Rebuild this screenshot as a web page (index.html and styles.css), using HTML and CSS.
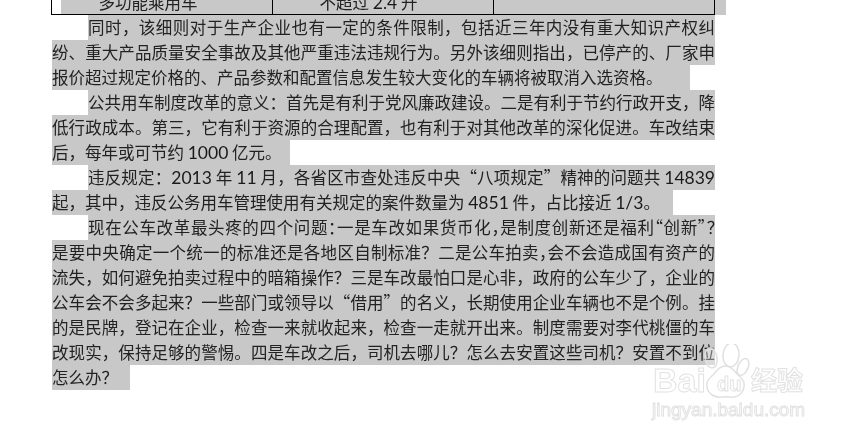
FILE: index.html
```html
<!DOCTYPE html>
<html lang="zh-CN">
<head>
<meta charset="utf-8">
<title>公车改革</title>
<link rel="stylesheet" href="styles.css">
</head>
<body>
<div class="table-wrap">
  <div class="table">
    <div class="cell c1">多功能乘用车</div>
    <div class="cell c2">不超过 <span class="num">2.4</span> 升</div>
    <div class="cell c3"></div>
  </div>
  <div class="tail"></div>
</div>
<div class="doc">
  <div class="line first">同时，该细则对于生产企业也有一定的条件限制，包括近三年内没有重大知识产权纠</div>
  <div class="line">纷、重大产品质量安全事故及其他严重违法违规行为。另外该细则指出，已停产的、厂家申</div>
  <div class="line short w638">报价超过规定价格的、产品参数和配置信息发生较大变化的车辆将被取消入选资格。</div>
  <div class="line first">公共用车制度改革的意义：首先是有利于党风廉政建设。二是有利于节约行政开支，降</div>
  <div class="line">低行政成本。第三，它有利于资源的合理配置，也有利于对其他改革的深化促进。车改结束</div>
  <div class="line short w238">后，每年或可节约 <span class="num">1000</span> 亿元。</div>
  <div class="line first">违反规定：<span class="num">2013</span> 年 <span class="num">11</span> 月，各省区市查处违反中央“八项规定”精神的问题共 <span class="num">14839</span></div>
  <div class="line short w621">起，其中，违反公务用车管理使用有关规定的案件数量为 <span class="num">4851</span> 件，占比接近 <span class="num">1/3</span>。</div>
  <div class="line first tight">现在公车改革最头疼的四个问题：一是车改如果货币化，是制度创新还是福利“创新”？</div>
  <div class="line">是要中央确定一个统一的标准还是各地区自制标准？二是公车拍卖<span class="tight">，</span>会不会造成国有资产的</div>
  <div class="line">流失，如何避免拍卖过程中的暗箱操作？三是车改最怕口是心非，政府的公车少了，企业的</div>
  <div class="line">公车会不会多起来？一些部门或领导以“借用”的名义，长期使用企业车辆也不是个例。挂</div>
  <div class="line">的是民牌，登记在企业，检查一来就收起来，检查一走就开出来。制度需要对李代桃僵的车</div>
  <div class="line">改现实，保持足够的警惕。四是车改之后，司机去哪儿？怎么去安置这些司机？安置不到位</div>
  <div class="line short w78">怎么办？</div>
</div>
<div class="mark">
  <svg class="paw" width="72" height="70" viewBox="0 0 72 70">
    <ellipse cx="19" cy="14" rx="6" ry="10" transform="rotate(-10 19 14)"/>
    <ellipse cx="39" cy="11" rx="8" ry="12" transform="rotate(5 39 11)"/>
    <ellipse cx="51" cy="23" rx="5" ry="9" transform="rotate(25 51 23)"/>
    <path d="M34 22c6 0 8 5 12 9 4 3 7 7 6 12-1 7-7 11-14 10-3-.5-5-.5-8 0-7 1-14-3-15-10-1-5 2-9 6-12 4-4 6-9 13-9z"/>
  </svg>
  <span class="bai">Bai</span>
  <span class="du">du</span>
  <span class="jy">经验</span>
  <span class="url">jingyan.baidu.com</span>
</div>
</body>
</html>
```
FILE: styles.css
```css
* { box-sizing: border-box; }
html, body { margin: 0; padding: 0; background: #fff; }
body {
  width: 851px;
  height: 437px;
  overflow: hidden;
  position: relative;
  font-family: "Noto Sans CJK SC", "Noto Sans", sans-serif;
  font-weight: 400;
  font-size: 16.5px;
  color: #222;
}
.table-wrap {
  display: flex;
  margin-left: 51px;
  height: 15px;
  filter: blur(0.25px);
}
.table {
  display: flex;
  width: 664px;
  height: 15px;
  padding-left: 9px;
  border-left: 1px solid #000;
  border-right: 1px solid #000;
  border-bottom: 1px solid #000;
  background: #fff;
}
.cell {
  background: #c8c8c8;
  line-height: 5px;
  text-align: center;
  overflow: hidden;
  white-space: nowrap;
  border-right: 1px solid #000;
}
.c1 { width: 212px; padding-right: 37px; }
.c2 { width: 221px; padding-right: 29px; }
.c3 { flex: 1; border-right: 0; }
.tail { width: 11px; background: #c8c8c8; }
.doc {
  display: flex;
  flex-direction: column;
  align-items: flex-start;
  margin-left: 52px;
  width: 663px;
  filter: blur(0.25px);
}
.line {
  width: 663px;
  height: 25px;
  line-height: 25px;
  background: #c8c8c8;
  white-space: nowrap;
  text-align: justify;
  text-align-last: justify;
}
.first { width: 627px; margin-left: 36px; }
.short { text-align: left; text-align-last: left; }
.w638 { width: 638px; }
.w621 { width: 621px; }
.w238 { width: 238px; }
.w78 { width: 78px; }
.tight { font-feature-settings: "halt"; }
.num { font-family: Lato, sans-serif; font-weight: 400; font-size: 17.5px; color: #1a1a1a; }
.mark {
  position: absolute;
  left: 650px;
  top: 342px;
  width: 160px;
  height: 80px;
  color: #fff;
  -webkit-text-stroke: 1px #e2e2e2;
  font-family: "Liberation Sans", sans-serif;
  filter: blur(0.4px);
}
.paw {
  position: absolute;
  left: 42px;
  top: 2px;
  fill: #fff;
  fill-opacity: 0.35;
  stroke: #e0e0e0;
  stroke-width: 1.5;
}
.bai, .du, .jy, .url { position: absolute; white-space: nowrap; }
.bai { left: 3px; top: 18px; font-size: 34px; font-weight: 700; line-height: 40px; }
.du { left: 67px; top: 30px; font-size: 20px; font-weight: 700; line-height: 24px; }
.jy { left: 101px; top: 22px; font-family: "Noto Sans CJK SC", sans-serif; font-weight: 700; font-size: 26px; line-height: 30px; }
.url { left: 2px; top: 56px; font-size: 19px; line-height: 24px; }
```
